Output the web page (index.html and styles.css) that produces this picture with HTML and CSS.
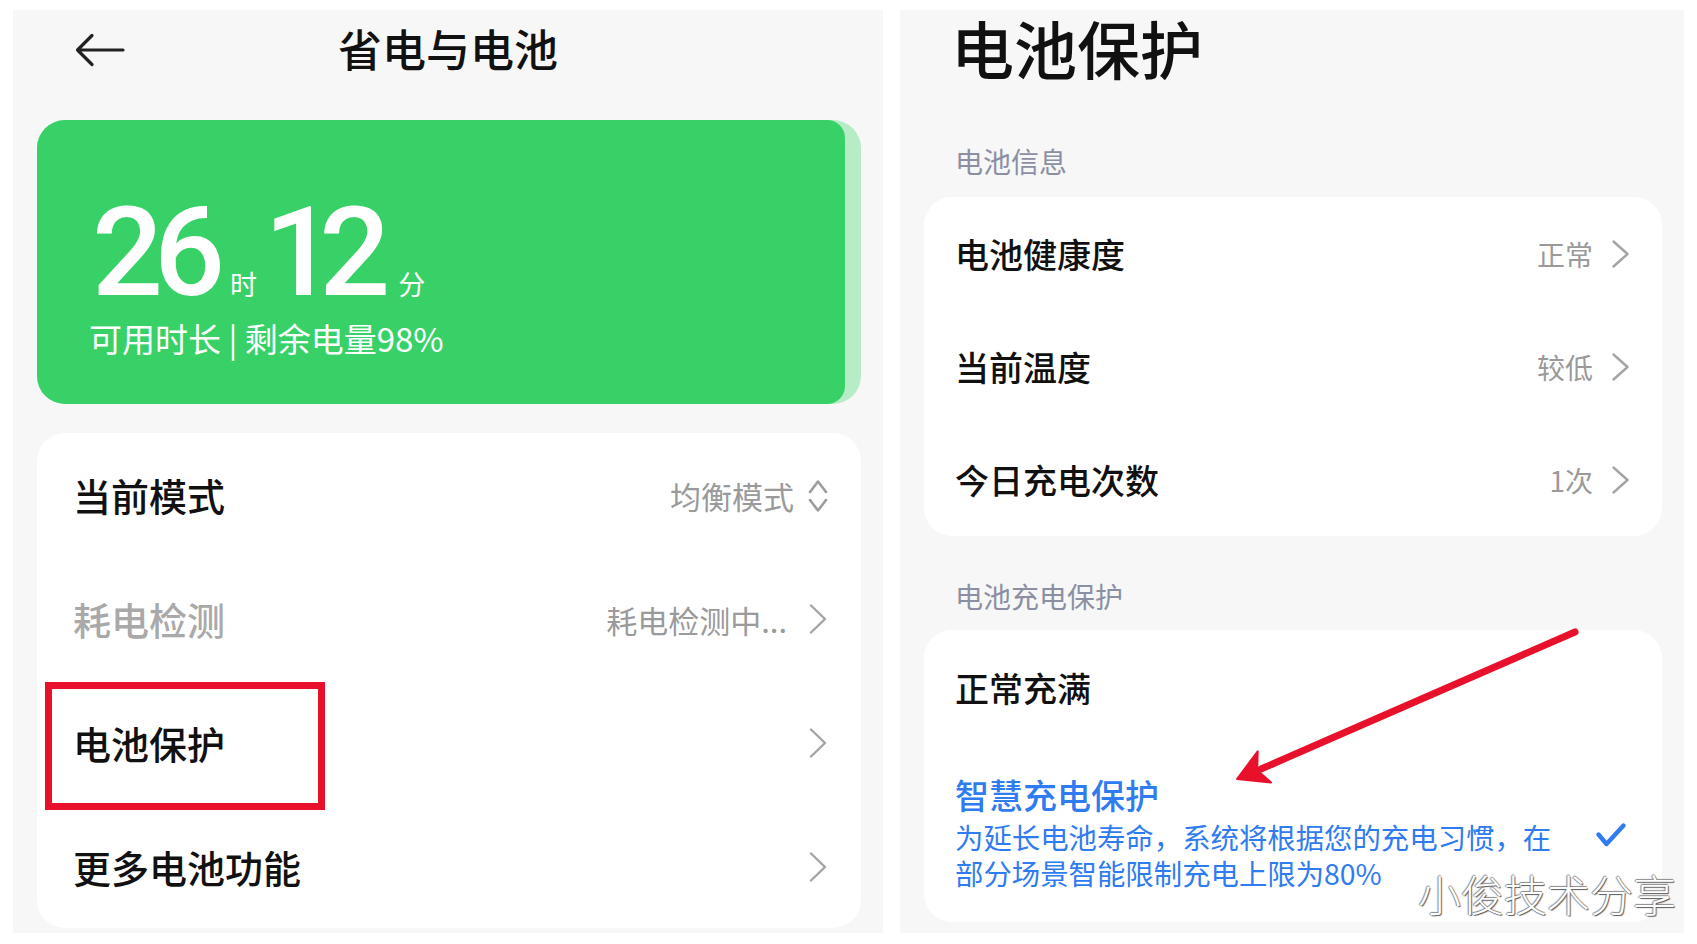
FILE: index.html
```html
<!DOCTYPE html>
<html lang="zh-CN">
<head>
<meta charset="utf-8">
<title>电池保护</title>
<link rel="stylesheet" href="styles.css">
</head>
<body>
<div class="page">
  <section class="panel panel-left">
    <header class="topbar">
      <svg class="back" viewBox="0 0 50 34" aria-hidden="true"><path d="M2.5 17 H48 M17 2.5 L2.5 17 L17 31.5" fill="none" stroke="#222" stroke-width="3.2" stroke-linecap="round" stroke-linejoin="round"/></svg>
      <h1 class="topbar-title">省电与电池</h1>
      <span></span>
    </header>
    <div class="battery-card">
      <div class="battery-fill" style="width:98%"></div>
      <div class="battery-content">
        <div class="remain"><span class="big big-h">26</span><span class="unit u1">时</span><span class="big big-m">12</span><span class="unit u2">分</span></div>
        <div class="remain-sub">可用时长 | 剩余电量98%</div>
      </div>
    </div>
    <div class="list-card">
      <div class="row">
        <span class="row-label">当前模式</span>
        <span class="row-value">均衡模式</span>
        <svg class="updown" viewBox="0 0 24 36" aria-hidden="true"><path d="M4 15 L12 4.5 L20 15 M4 23 L12 33.5 L20 23" fill="none" stroke="#9c9c9c" stroke-width="2.6" stroke-linecap="round" stroke-linejoin="round"/></svg>
      </div>
      <div class="row row-disabled">
        <span class="row-label">耗电检测</span>
        <span class="row-value row-value-wide">耗电检测中...</span>
        <svg class="chev" viewBox="0 0 24 30" aria-hidden="true"><path d="M5 1.5 L19 15 L5 28.5" fill="none" stroke="#a4a4a4" stroke-width="2.4" stroke-linecap="round" stroke-linejoin="round"/></svg>
      </div>
      <div class="row row-marked">
        <span class="row-label">电池保护</span>
        <svg class="chev" viewBox="0 0 24 30" aria-hidden="true"><path d="M5 1.5 L19 15 L5 28.5" fill="none" stroke="#a4a4a4" stroke-width="2.4" stroke-linecap="round" stroke-linejoin="round"/></svg>
        <div class="mark-box"></div>
      </div>
      <div class="row">
        <span class="row-label">更多电池功能</span>
        <svg class="chev" viewBox="0 0 24 30" aria-hidden="true"><path d="M5 1.5 L19 15 L5 28.5" fill="none" stroke="#a4a4a4" stroke-width="2.4" stroke-linecap="round" stroke-linejoin="round"/></svg>
      </div>
    </div>
  </section>

  <section class="panel panel-right">
    <h1 class="big-title">电池保护</h1>
    <h2 class="section-label s1">电池信息</h2>
    <div class="info-card">
      <div class="info-row">
        <span class="info-label">电池健康度</span>
        <span class="info-value">正常</span>
        <svg class="chev-sm" viewBox="0 0 24 28" aria-hidden="true"><path d="M4.5 1.5 L18.5 14 L4.5 26.5" fill="none" stroke="#a4a4a4" stroke-width="2.4" stroke-linecap="round" stroke-linejoin="round"/></svg>
      </div>
      <div class="info-row">
        <span class="info-label">当前温度</span>
        <span class="info-value">较低</span>
        <svg class="chev-sm" viewBox="0 0 24 28" aria-hidden="true"><path d="M4.5 1.5 L18.5 14 L4.5 26.5" fill="none" stroke="#a4a4a4" stroke-width="2.4" stroke-linecap="round" stroke-linejoin="round"/></svg>
      </div>
      <div class="info-row">
        <span class="info-label">今日充电次数</span>
        <span class="info-value">1次</span>
        <svg class="chev-sm" viewBox="0 0 24 28" aria-hidden="true"><path d="M4.5 1.5 L18.5 14 L4.5 26.5" fill="none" stroke="#a4a4a4" stroke-width="2.4" stroke-linecap="round" stroke-linejoin="round"/></svg>
      </div>
    </div>
    <h2 class="section-label s2">电池充电保护</h2>
    <div class="charge-card">
      <div class="charge-row">正常充满</div>
      <div class="smart-row">
        <div class="smart-text">
          <div class="smart-title">智慧充电保护</div>
          <p class="smart-desc">为延长电池寿命，系统将根据您的充电习惯，在部分场景智能限制充电上限为80%</p>
        </div>
        <svg class="check" viewBox="0 0 32 26" aria-hidden="true"><path d="M3.5 12.5 L11.5 22 L28.5 3.5" fill="none" stroke="#2f7bf0" stroke-width="4.4" stroke-linecap="round" stroke-linejoin="round"/></svg>
      </div>
      <svg class="red-arrow" viewBox="0 0 360 170" aria-hidden="true">
        <path d="M350 10 L36 147" fill="none" stroke="#e8102a" stroke-width="7" stroke-linecap="round"/>
        <path d="M12 157 L32.7 129.4 L32.2 148.2 L46 160.6 Z" fill="#e8102a" stroke="#e8102a" stroke-width="2" stroke-linejoin="round"/>
      </svg>
    </div>
  </section>

  <div class="watermark">小俊技术分享</div>
</div>
</body>
</html>
```

FILE: styles.css
```css
* {
  box-sizing: border-box;
  margin: 0;
  padding: 0;
}

html, body {
  width: 1697px;
  height: 944px;
  background: #ffffff;
  overflow: hidden;
}

body {
  font-family: "Noto Sans CJK SC", "Noto Sans", sans-serif;
  color: #111111;
}

.page {
  position: relative;
  display: flex;
  gap: 17px;
  height: 944px;
  padding: 10px 0 0 13px;
}

.panel {
  display: flex;
  flex-direction: column;
  height: 923px;
  background: #f7f7f7;
}

.panel-left {
  width: 870px;
}

.panel-right {
  width: 784px;
}

/* ---------- left panel ---------- */

.topbar {
  display: grid;
  grid-template-columns: 1fr auto 1fr;
  align-items: center;
  height: 80px;
}

.back {
  display: block;
  width: 50px;
  height: 34px;
  margin-left: 62px;
}

.topbar-title {
  font-size: 44px;
  line-height: 44px;
  font-weight: 500;
  margin-bottom: 4px;
}

.battery-card {
  position: relative;
  height: 284px;
  margin: 30px 22px 0 24px;
  border-radius: 28px;
  background: #b6ecc6;
  overflow: hidden;
}

.battery-fill {
  position: absolute;
  left: 0;
  top: 0;
  bottom: 0;
  background: #38d168;
  border-radius: 0 18px 18px 0;
}

.battery-content {
  position: relative;
  padding: 70px 0 0 52px;
  color: #ffffff;
}

.remain {
  display: flex;
  align-items: baseline;
}

.big {
  font-family: Roboto, "Noto Sans", sans-serif;
  font-weight: 500;
  font-size: 125px;
  line-height: 125px;
}

.big-h {
  margin-left: 3px;
  letter-spacing: -9px;
}

.big-m {
  letter-spacing: -16px;
}

.unit {
  font-size: 27px;
  line-height: 27px;
  font-weight: 400;
}

.u1 {
  margin-left: 14px;
  margin-right: 7px;
}

.u2 {
  margin-left: 24px;
}

.remain-sub {
  margin-top: 7px;
  font-size: 33px;
  line-height: 33px;
  font-weight: 400;
}

.list-card {
  height: 495px;
  margin: 29px 22px 0 24px;
  border-radius: 28px;
  background: #ffffff;
}

.row {
  position: relative;
  display: flex;
  align-items: center;
  height: 124px;
  padding: 0 31px 0 36px;
}

.row-label {
  flex: 1;
  font-size: 38px;
  line-height: 38px;
  font-weight: 500;
}

.row-value {
  font-size: 31px;
  line-height: 31px;
  color: #9a9a9a;
  margin-right: 12px;
}

.row-value-wide {
  margin-right: 19px;
}

.row-disabled .row-label {
  color: #a9a9a9;
}

.updown {
  display: block;
  width: 24px;
  height: 36px;
}

.chev {
  display: block;
  width: 24px;
  height: 30px;
}

.mark-box {
  position: absolute;
  left: 8px;
  top: 1px;
  width: 280px;
  height: 128px;
  border: 7px solid #e8102a;
}

/* ---------- right panel ---------- */

.big-title {
  margin: 5px 0 0 51px;
  font-size: 63px;
  line-height: 63px;
  font-weight: 500;
}

.section-label {
  margin-left: 55px;
  font-size: 28px;
  line-height: 28px;
  font-weight: 400;
  color: #8a8fa3;
}

.s1 {
  margin-top: 69px;
}

.s2 {
  margin-top: 46px;
}

.info-card {
  margin: 22px 22px 0 24px;
  border-radius: 28px;
  background: #ffffff;
}

.info-row {
  display: flex;
  align-items: center;
  height: 113px;
  padding: 0 29px 0 31px;
}

.info-label {
  flex: 1;
  font-size: 34px;
  line-height: 34px;
  font-weight: 500;
}

.info-value {
  font-size: 28px;
  line-height: 28px;
  color: #9a9a9a;
  margin-right: 16px;
}

.chev-sm {
  display: block;
  width: 24px;
  height: 28px;
}

.charge-card {
  position: relative;
  margin: 20px 22px 0 24px;
  border-radius: 28px;
  background: #ffffff;
}

.charge-row {
  display: flex;
  align-items: center;
  height: 115px;
  padding-left: 31px;
  font-size: 34px;
  line-height: 34px;
  font-weight: 500;
}

.smart-row {
  display: flex;
  align-items: center;
  padding: 33px 35px 31px 31px;
  color: #2f7bf0;
}

.smart-text {
  flex: 1;
}

.smart-title {
  font-size: 34px;
  line-height: 34px;
  font-weight: 500;
}

.smart-desc {
  max-width: 604px;
  margin-top: 7px;
  font-size: 28.4px;
  line-height: 36px;
}

.check {
  display: block;
  width: 32px;
  height: 26px;
}

.red-arrow {
  position: absolute;
  left: 301px;
  top: -8px;
  width: 360px;
  height: 170px;
}

.watermark {
  position: absolute;
  left: 1418px;
  top: 872px;
  font-size: 43px;
  line-height: 43px;
  font-weight: 300;
  color: #ffffff;
  text-shadow: 1px 1px 1px #5a5a5a, -1px 0 1px #8a8a8a, 0 -1px 1px #8a8a8a;
}
```
